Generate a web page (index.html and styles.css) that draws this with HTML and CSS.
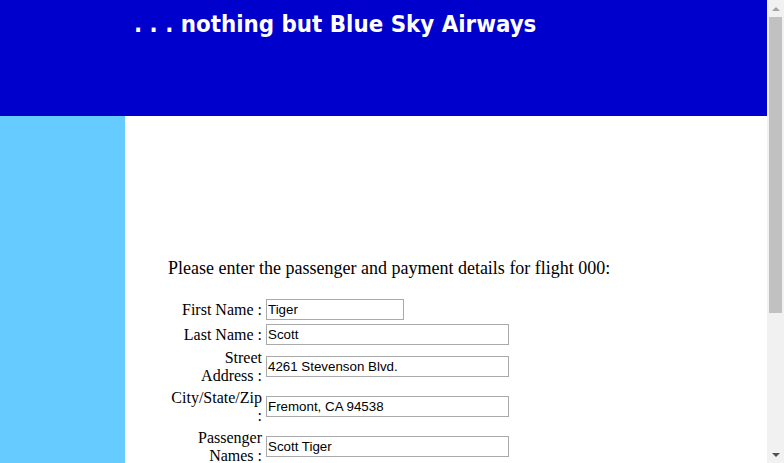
FILE: index.html
```html
<!DOCTYPE html>
<html>
<head>
<meta charset="utf-8">
<title>Blue Sky Airways</title>
<link rel="stylesheet" href="styles.css">
</head>
<body>
<div class="page">
  <div class="header">
    <div class="title">. . . nothing but Blue Sky Airways</div>
  </div>
  <div class="main">
    <div class="side"></div>
    <div class="content">
      <p class="intro">Please enter the passenger and payment details for flight 000:</p>
      <table class="form">
        <tr><td class="lbl">First Name :</td><td><input class="short" type="text" value="Tiger"></td></tr>
        <tr><td class="lbl">Last Name :</td><td><input class="long" type="text" value="Scott"></td></tr>
        <tr class="tall"><td class="lbl">Street Address :</td><td><input class="long" type="text" value="4261 Stevenson Blvd."></td></tr>
        <tr class="tall"><td class="lbl">City/State/Zip :</td><td><input class="long" type="text" value="Fremont, CA 94538"></td></tr>
        <tr class="tall"><td class="lbl">Passenger Names :</td><td><input class="long" type="text" value="Scott Tiger"></td></tr>
        <tr class="tall"><td class="lbl">Credit Card Number :</td><td><input class="long" type="text" value=""></td></tr>
        <tr><td class="lbl">Expiry :</td><td><input class="short" type="text" value=""></td></tr>
      </table>
    </div>
  </div>
</div>
<div class="scrollbar">
  <div class="sb-btn"><span class="arrow-up"></span></div>
  <div class="sb-track"><div class="sb-thumb"></div></div>
  <div class="sb-btn"><span class="arrow-down"></span></div>
</div>
</body>
</html>
```

FILE: styles.css
```css
html, body {
  margin: 0;
  padding: 0;
}
body {
  font-family: "Liberation Serif", "Times New Roman", serif;
  font-size: 16px;
  color: #000;
  background: #fff;
  display: flex;
  height: 463px;
  overflow: hidden;
}
.page {
  flex: 1;
  min-width: 0;
  overflow: hidden;
}
.header {
  height: 116px;
  background: #0000cc;
  box-sizing: border-box;
  padding: 10px 0 0 134px;
}
.title {
  font-family: "DejaVu Sans Condensed", "DejaVu Sans", Tahoma, sans-serif;
  font-stretch: condensed;
  font-weight: bold;
  font-size: 23.8px;
  line-height: 28px;
  color: #fff;
  white-space: nowrap;
}
.main {
  display: flex;
  min-height: 555px;
}
.side {
  width: 125px;
  flex: none;
  background: #66ccff;
}
.content {
  flex: 1;
  padding: 142px 0 40px 43px;
}
.intro {
  margin: 0 0 17px 0;
  font-size: 18px;
  line-height: 21px;
}
.form {
  border-collapse: separate;
  border-spacing: 2px;
  margin-left: -1px;
}
.form td {
  padding: 1px;
  vertical-align: middle;
  line-height: 18px;
}
.form td.lbl {
  width: 92px;
  text-align: right;
}
.form input {
  font-family: "Liberation Sans", Arial, sans-serif;
  font-size: 13.33px;
  height: 21px;
  box-sizing: border-box;
  border: 1px solid #a9a9a9;
  padding: 1px 1px;
  margin: 0;
  display: block;
  color: #000;
}
.form .tall input {
  margin-top: -1px;
}
.form input.short { width: 138px; }
.form input.long { width: 243px; }

.scrollbar {
  width: 17px;
  flex: none;
  background: #f1f1f1;
  display: flex;
  flex-direction: column;
}
.sb-btn {
  height: 17px;
  flex: none;
  display: flex;
  align-items: center;
  justify-content: center;
}
.arrow-up {
  width: 0;
  height: 0;
  border-left: 4px solid transparent;
  border-right: 4px solid transparent;
  border-bottom: 4px solid #a3a3a3;
}
.arrow-down {
  width: 0;
  height: 0;
  border-left: 4px solid transparent;
  border-right: 4px solid transparent;
  border-top: 4px solid #505050;
}
.sb-track {
  flex: 1;
  padding: 0 2px;
}
.sb-thumb {
  height: 296px;
  background: #c1c1c1;
}
```
